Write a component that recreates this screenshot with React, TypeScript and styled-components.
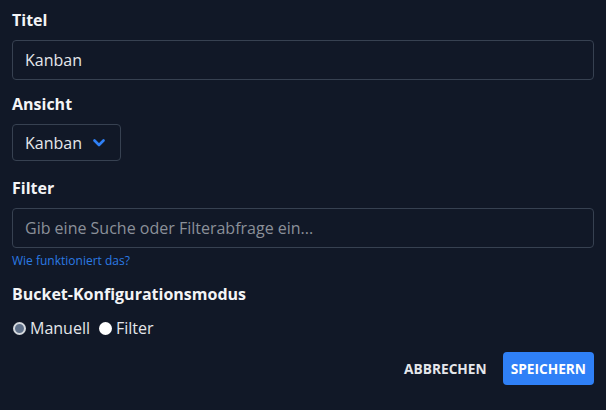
import React, { useState } from "react";
import styled, { createGlobalStyle } from "styled-components";

const GlobalStyle = createGlobalStyle`
  body {
    margin: 0;
    background: #111827;
    font-family: "Open Sans", "Noto Sans", sans-serif;
    color: #e5e7eb;
  }
`;

const Form = styled.div`
  padding: 8px 12px 0 12px;
  display: flex;
  flex-direction: column;
`;

const Field = styled.div<{ $space?: number }>`
  margin-bottom: ${(p) => p.$space ?? 12}px;
`;

const Label = styled.div`
  font-size: 16px;
  font-weight: 700;
  line-height: 24px;
  color: #f3f4f6;
  margin-bottom: 8px;
`;

const TextInput = styled.input`
  box-sizing: border-box;
  width: 100%;
  height: 40px;
  padding: 0 12px;
  background: #111827;
  border: 1px solid #374151;
  border-radius: 4px;
  color: #e5e7eb;
  font-family: inherit;
  font-size: 16px;
  outline: none;
  &::placeholder {
    color: #8b9099;
  }
`;

const Select = styled.div`
  box-sizing: border-box;
  display: inline-flex;
  align-items: center;
  gap: 11px;
  height: 37px;
  padding: 0 15px 0 12px;
  border: 1px solid #374151;
  border-radius: 4px;
  font-size: 16px;
  color: #e5e7eb;
`;

const HelpLink = styled.a`
  display: block;
  margin-top: 4px;
  font-size: 12px;
  line-height: 18px;
  color: #2b7ae4;
  text-decoration: none;
`;

const RadioRow = styled.div`
  display: flex;
  align-items: center;
  font-size: 16px;
  line-height: 22px;
  padding-top: 3px;
  color: #e5e7eb;
`;

const RadioLabel = styled.label`
  display: inline-flex;
  align-items: center;
  gap: 4px;
  margin-right: 8px;
`;

const Radio = styled.input`
  appearance: none;
  margin: 0 0 0 1px;
  width: 13px;
  height: 13px;
  border-radius: 50%;
  background: #ffffff;
  &:checked {
    background: #5f7089;
    border: 2px solid #d4d8dd;
    box-sizing: border-box;
  }
`;

const Actions = styled.div`
  display: flex;
  justify-content: flex-end;
  align-items: center;
  gap: 8px;
  margin-top: 13px;
`;

const Button = styled.button<{ $primary?: boolean }>`
  height: 33px;
  padding: 0 8px;
  border: none;
  border-radius: 4px;
  font-family: inherit;
  font-size: 13.7px;
  font-weight: 700;
  color: ${(p) => (p.$primary ? "#ffffff" : "#e5e7eb")};
  background: ${(p) => (p.$primary ? "#2f80f7" : "transparent")};
`;

const Chevron = () => (
  <svg width="12" height="8" viewBox="0 0 12 8">
    <path d="M1.5 1.5 L6 6 L10.5 1.5" fill="none" stroke="#2f80f7" strokeWidth="2.6" strokeLinecap="round" strokeLinejoin="round" />
  </svg>
);

export default function App() {
  const [mode, setMode] = useState("manual");
  return (
    <Form>
      <GlobalStyle />
      <Field>
        <Label>Titel</Label>
        <TextInput defaultValue="Kanban" />
      </Field>
      <Field $space={15}>
        <Label>Ansicht</Label>
        <Select>
          Kanban
          <Chevron />
        </Select>
      </Field>
      <Field>
        <Label>Filter</Label>
        <TextInput placeholder="Gib eine Suche oder Filterabfrage ein..." />
        <HelpLink href="#">Wie funktioniert das?</HelpLink>
      </Field>
      <Field $space={0}>
        <Label>Bucket-Konfigurationsmodus</Label>
        <RadioRow>
          <RadioLabel>
            <Radio type="radio" checked={mode === "manual"} onChange={() => setMode("manual")} />
            Manuell
          </RadioLabel>
          <RadioLabel>
            <Radio type="radio" checked={mode === "filter"} onChange={() => setMode("filter")} />
            Filter
          </RadioLabel>
        </RadioRow>
      </Field>
      <Actions>
        <Button>ABBRECHEN</Button>
        <Button $primary>SPEICHERN</Button>
      </Actions>
    </Form>
  );
}
